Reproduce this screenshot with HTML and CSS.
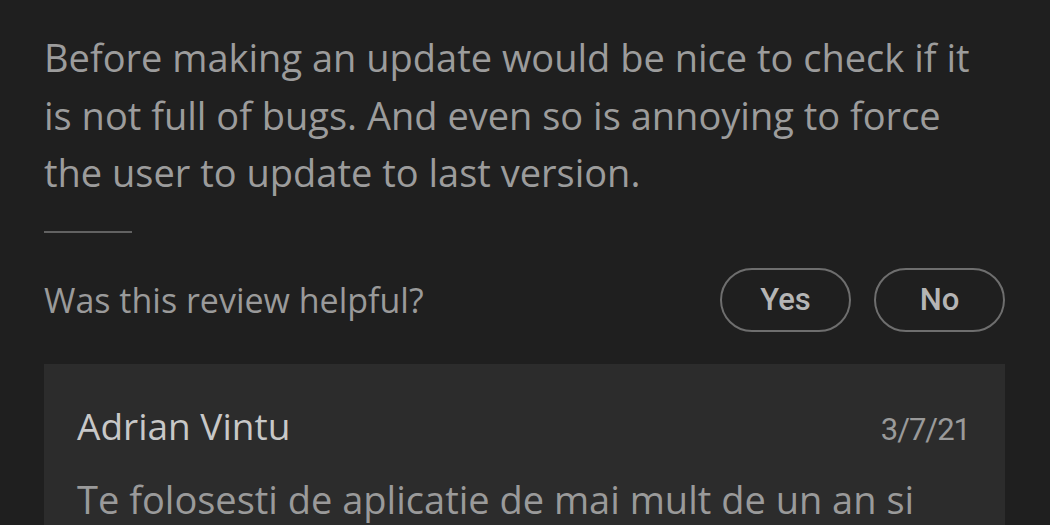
FILE: index.html
```html
<!DOCTYPE html>
<html lang="en">
<head>
<meta charset="utf-8">
<link rel="stylesheet" href="styles.css">
</head>
<body>
<main class="page">
  <p class="review-text">Before making an update would be nice to check if it is not full of bugs. And even so is annoying to force the user to update to last version.</p>
  <hr class="divider">
  <div class="helpful">
    <span class="helpful-label">Was this review helpful?</span>
    <div class="helpful-actions">
      <button class="pill">Yes</button>
      <button class="pill">No</button>
    </div>
  </div>
  <section class="reply">
    <div class="reply-head">
      <span class="reply-name">Adrian Vintu</span>
      <span class="reply-date">3/7/21</span>
    </div>
    <p class="reply-text">Te folosesti de aplicatie de mai mult de un an si</p>
  </section>
</main>
</body>
</html>
```

FILE: styles.css
```css
html, body {
  margin: 0;
  padding: 0;
  background: #1f1f1f;
  height: 100%;
  overflow: hidden;
}

.page {
  padding: 29px 45px 0 44px;
  font-family: "Open Sans", Roboto, sans-serif;
  display: flex;
  flex-direction: column;
}

.review-text {
  margin: 0;
  font-size: 38px;
  line-height: 57.5px;
  color: #9c9c9c;
  max-width: 935px;
}

.divider {
  margin: 29px 0 0 0;
  width: 88px;
  height: 2px;
  border: 0;
  background: #626262;
}

.helpful {
  margin-top: 35px;
  display: flex;
  align-items: center;
  justify-content: space-between;
}

.helpful-label {
  font-size: 34px;
  color: #9a9a9a;
}

.helpful-actions {
  display: flex;
  gap: 23px;
}

.pill {
  width: 131px;
  height: 64px;
  border-radius: 32px;
  border: 2px solid #6e6e6e;
  background: transparent;
  color: #b5b5b5;
  font-family: Roboto, "Noto Sans", sans-serif;
  font-size: 31px;
  font-weight: 500;
  padding: 0;
}

.reply {
  margin-top: 32px;
  background: #2c2c2c;
  padding: 36px 35px 20px 33px;
  height: 200px;
}

.reply-head {
  display: flex;
  justify-content: space-between;
  align-items: baseline;
}

.reply-name {
  font-size: 37px;
  color: #c8c8c8;
}

.reply-date {
  font-family: Roboto, sans-serif;
  font-size: 31px;
  letter-spacing: -1px;
  color: #9a9a9a;
}

.reply-text {
  margin: 22px 0 0 0;
  font-size: 38px;
  line-height: 52px;
  color: #9a9a9a;
}
```
